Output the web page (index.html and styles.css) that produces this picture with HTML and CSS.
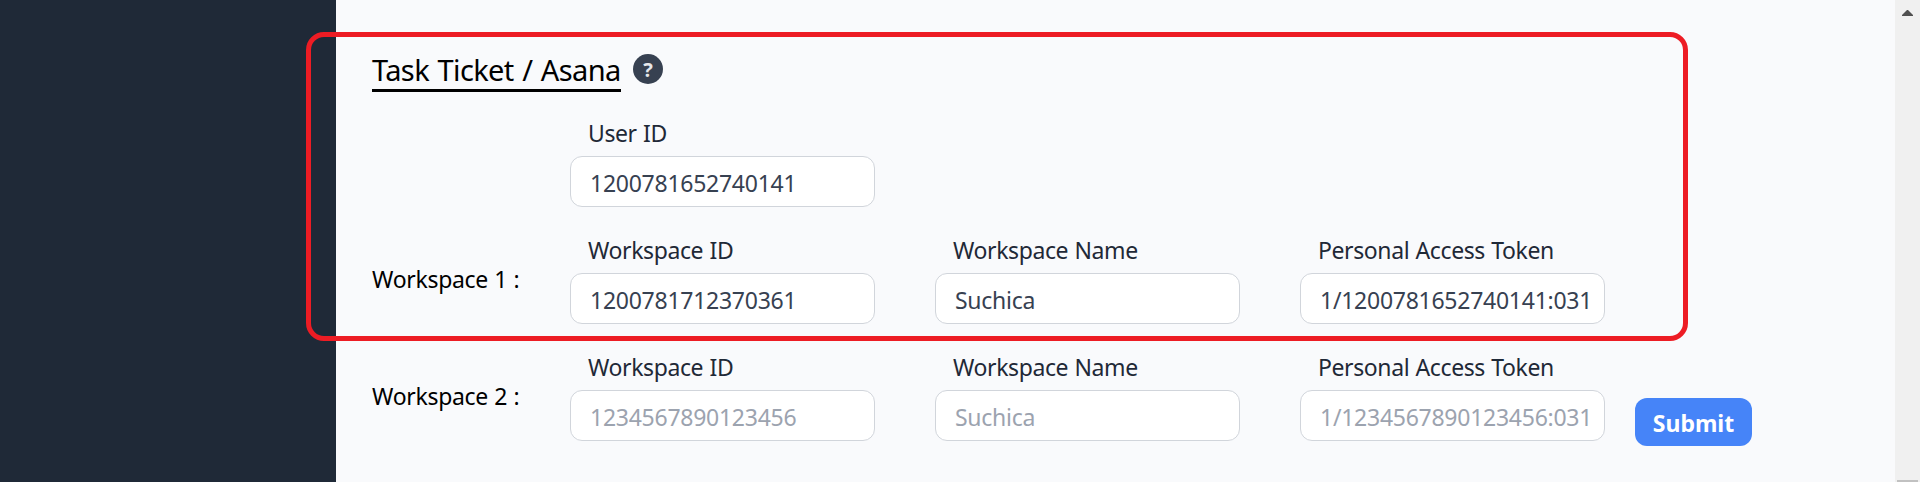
FILE: index.html
```html
<!DOCTYPE html>
<html lang="en">
<head>
<meta charset="utf-8">
<title>Task Ticket / Asana</title>
<link rel="stylesheet" href="styles.css">
</head>
<body>
<div class="app">
  <aside class="sidebar"></aside>
  <main class="content">
    <header class="section-head">
      <h2 class="title">Task Ticket / Asana</h2>
      <span class="help">?</span>
    </header>
    <form class="form">
      <div class="row">
        <span class="row-name"></span>
        <label class="field"><span class="label">User ID</span><input class="input" value="1200781652740141"></label>
      </div>
      <div class="row">
        <span class="row-name">Workspace 1 :</span>
        <label class="field"><span class="label">Workspace ID</span><input class="input" value="1200781712370361"></label>
        <label class="field"><span class="label">Workspace Name</span><input class="input" value="Suchica"></label>
        <label class="field"><span class="label">Personal Access Token</span><input class="input" value="1/1200781652740141:031"></label>
      </div>
      <div class="row">
        <span class="row-name">Workspace 2 :</span>
        <label class="field"><span class="label">Workspace ID</span><input class="input" placeholder="1234567890123456"></label>
        <label class="field"><span class="label">Workspace Name</span><input class="input" placeholder="Suchica"></label>
        <label class="field"><span class="label">Personal Access Token</span><input class="input" placeholder="1/1234567890123456:031"></label>
        <button class="submit" type="button">Submit</button>
      </div>
    </form>
  </main>
  <div class="scrollbar">
    <svg class="arrow" width="11" height="6" viewBox="0 0 11 6"><path d="M0 6V5L5 0h1l5 5v1z" fill="#505050"/></svg>
    <div class="thumb"></div>
  </div>
  <div class="highlight"></div>
</div>
</body>
</html>
```
FILE: styles.css
```css
* { box-sizing: border-box; }
body {
  margin: 0;
  font-family: "Noto Sans", "Open Sans", sans-serif;
  font-size: 23px;
  color: #000;
}
.app {
  position: relative;
  display: flex;
  height: 482px;
  overflow: hidden;
  background: #f9fafc;
}
.sidebar { width: 336px; background: #1f2937; }
.content { flex: 1; padding: 50px 0 0 36px; }
.section-head { display: flex; gap: 12px; height: 42px; }
.title {
  width: 249px;
  height: 42px;
  margin: 0;
  border-bottom: 3px solid #000;
  font-size: 29px;
  font-weight: 400;
  line-height: 40px;
  letter-spacing: -0.6px;
  word-spacing: 1.5px;
  white-space: nowrap;
}
.help {
  width: 30px;
  height: 30px;
  margin-top: 4px;
  border-radius: 50%;
  background: #374151;
  color: #e5e7eb;
  font-size: 20px;
  font-weight: 700;
  line-height: 32px;
  text-align: center;
}
.form { padding-top: 24px; }
.row {
  display: grid;
  grid-template-columns: 138px 305px 305px 305px 117px;
  column-gap: 60px;
  height: 117px;
}
.row-name {
  padding-top: 30px;
  line-height: 32px;
  letter-spacing: -0.3px;
  word-spacing: 0.6px;
  white-space: nowrap;
}
.field { display: flex; flex-direction: column; }
.label {
  height: 40px;
  padding-left: 18px;
  color: #1f2937;
  line-height: 34px;
  letter-spacing: -0.4px;
  word-spacing: 0.8px;
  white-space: nowrap;
}
.input {
  width: 305px;
  height: 51px;
  padding: 2px 12px 0 19px;
  border: 1px solid #d1d5db;
  border-radius: 12px;
  background: #fff;
  color: #374151;
  font: inherit;
  letter-spacing: -0.26px;
}
.input::placeholder { color: #9ca3af; opacity: 1; }
.submit {
  width: 117px;
  height: 48px;
  margin: 48px 0 0 -30px;
  padding: 2px 0 0;
  border: 0;
  border-radius: 12px;
  background: #4684f8;
  color: #fff;
  font: 700 23px "Noto Sans", sans-serif;
}
.scrollbar {
  display: flex;
  flex-direction: column;
  align-items: center;
  justify-content: space-between;
  width: 25px;
  padding-top: 10px;
  background: #f0f0f0;
}
.thumb { width: 21px; height: 2px; background: #c1c1c1; }
/* Outline laid over the sidebar and the form */
.highlight {
  position: absolute;
  left: 306px;
  top: 32px;
  width: 1382px;
  height: 309px;
  border: 5px solid #ed1c24;
  border-radius: 18px;
  pointer-events: none;
}
```
